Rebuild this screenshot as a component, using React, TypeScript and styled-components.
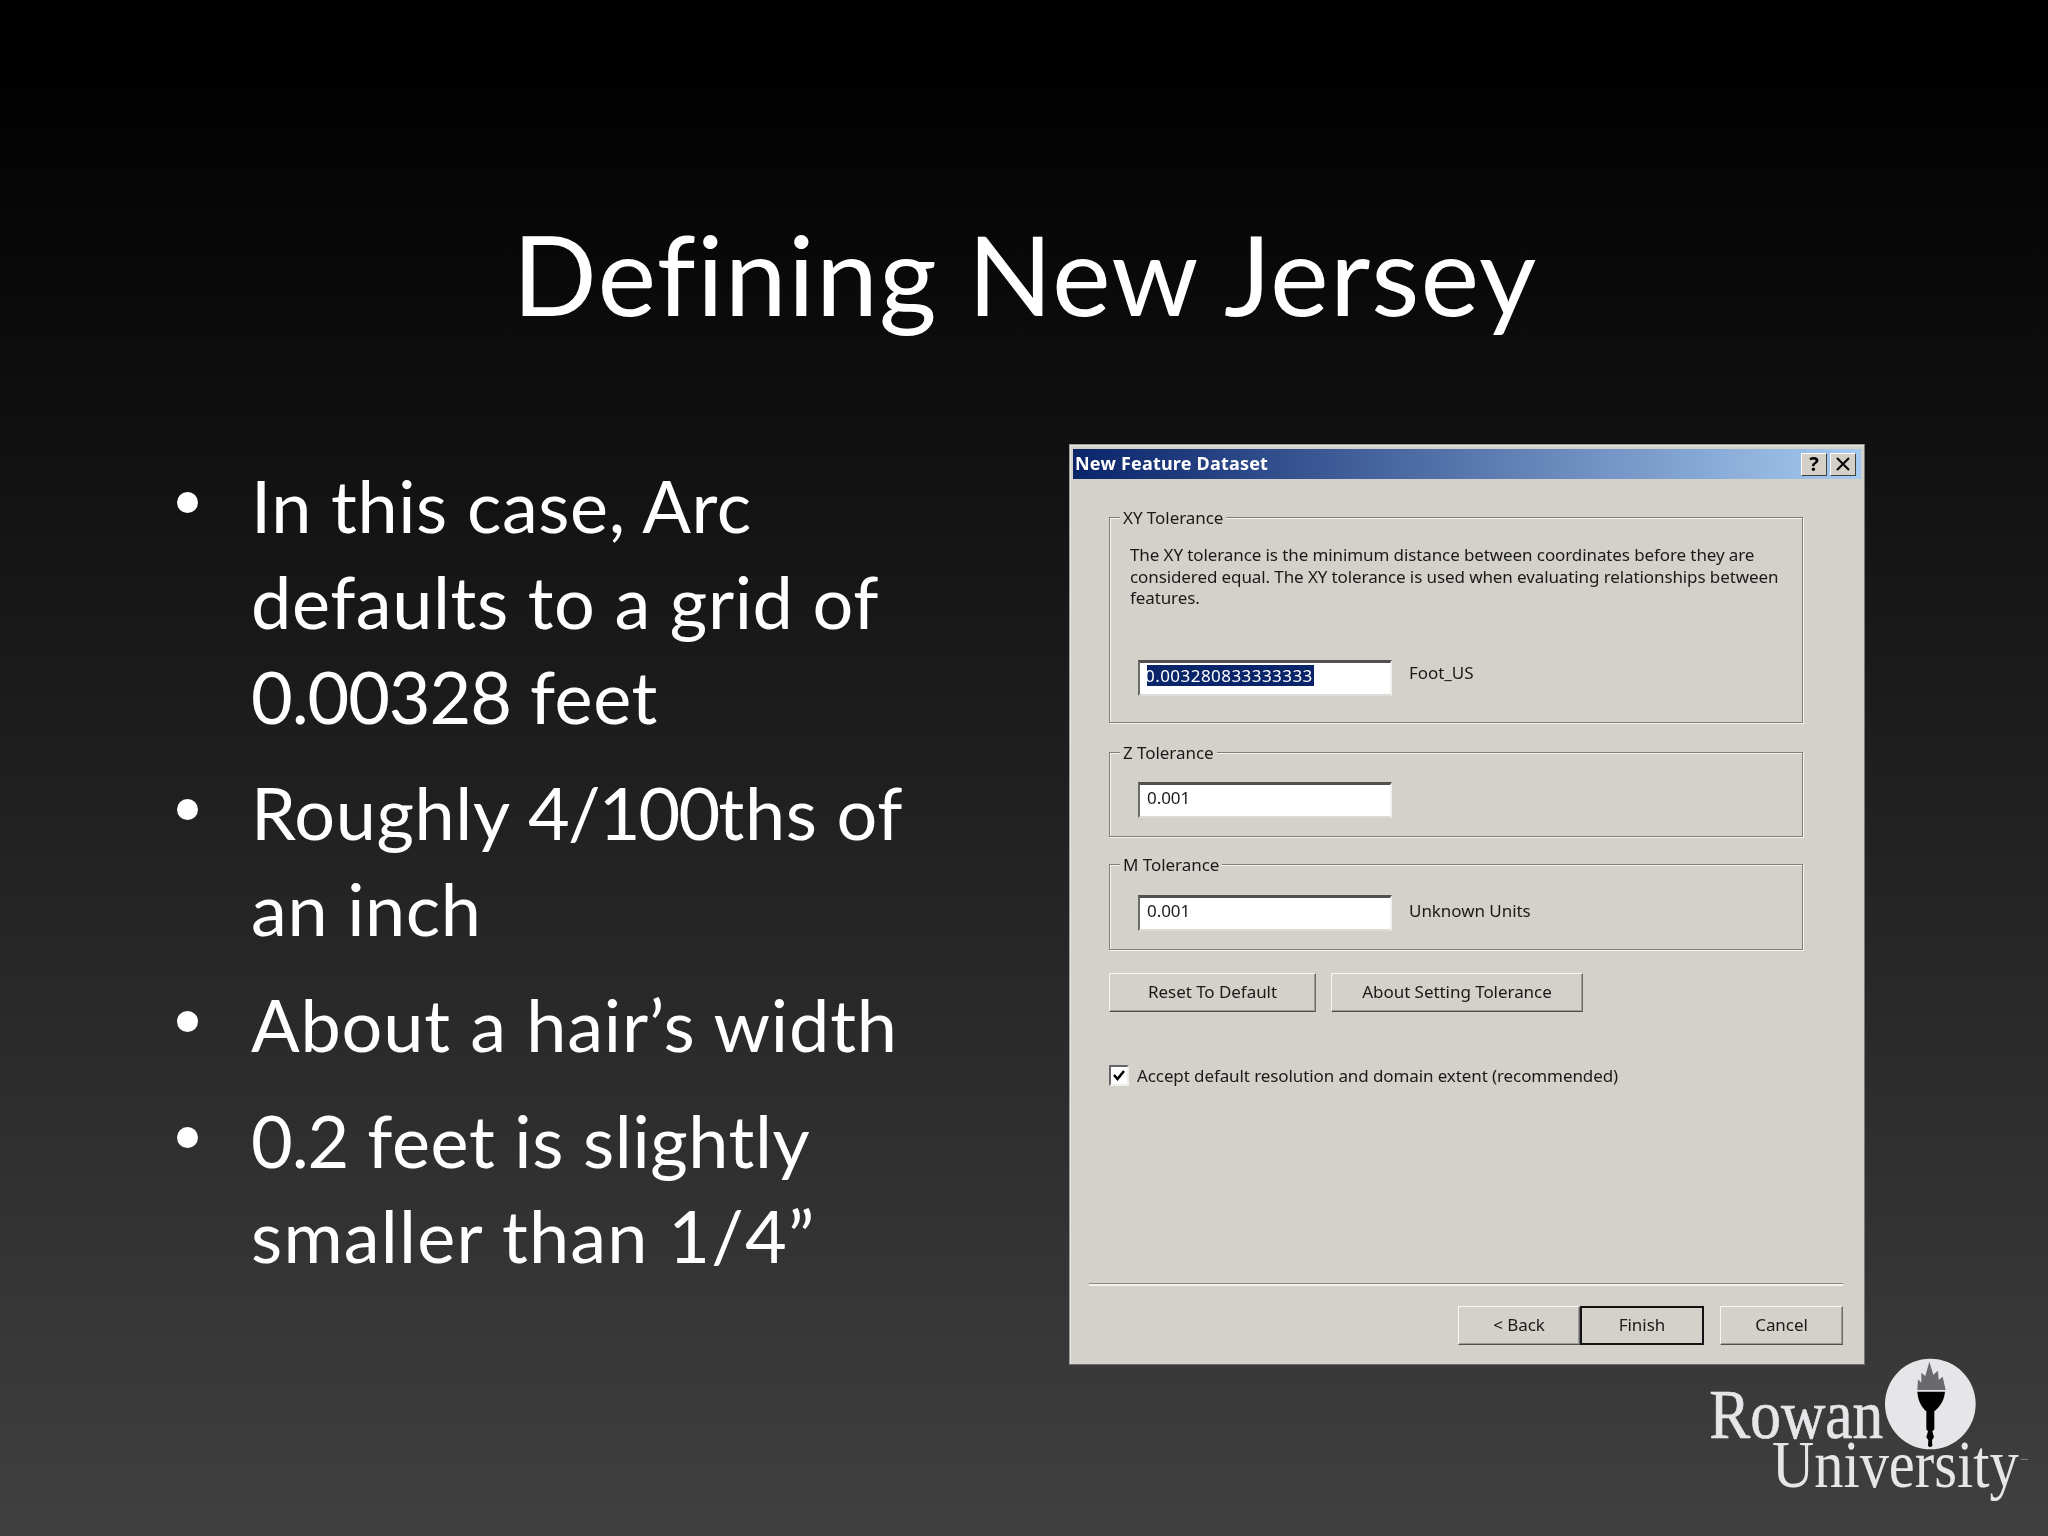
import React from "react";
import styled, { createGlobalStyle } from "styled-components";

const Global = createGlobalStyle`
  html, body { margin: 0; padding: 0; background: #000; }
  #root { width: 2048px; height: 1536px; }
`;

const Slide = styled.div`
  position: relative;
  width: 2048px;
  height: 1536px;
  overflow: hidden;
  background: linear-gradient(180deg, #000 0, #000 60px, #414041 1536px);
  font-family: Lato, "Noto Sans", sans-serif;
  color: #fff;
`;

const Title = styled.h1`
  margin: 0;
  padding: 212px 0 0 2px;
  height: 232px;
  box-sizing: content-box;
  text-align: center;
  font-size: 111px;
  line-height: 122px;
  font-weight: 400;
  letter-spacing: 1.25px;
`;

const Content = styled.div`
  display: flex;
  align-items: flex-start;
`;

const BulletList = styled.ul`
  list-style: none;
  margin: 0;
  padding: 14px 0 0 177px;
  width: 960px;
  box-sizing: border-box;
  flex: none;
`;

const Bullet = styled.li`
  display: flex;
  gap: 53px;
  font-size: 72px;
  line-height: 95.5px;
  margin-bottom: 20.5px;
  letter-spacing: 0.6px;
  white-space: nowrap;
  &::before {
    content: "";
    flex: none;
    width: 21px;
    height: 21px;
    margin-top: 34px;
    border-radius: 50%;
    background: #fff;
  }
`;

const Tracked = styled.span<{ $spacing: number }>`
  letter-spacing: ${(p) => p.$spacing}px;
`;

const Dialog = styled.div`
  width: 796px;
  height: 921px;
  box-sizing: border-box;
  margin-left: 109px;
  flex: none;
  padding: 4px 3px 0;
  background: #d3d1ca;
  border: 1px solid #9a9a98;
  border-right-color: #777;
  border-bottom-color: #6f6f6f;
  box-shadow: inset 1px 1px 0 #e8e8e4;
  font-family: "Noto Sans", sans-serif;
  font-size: 17px;
  letter-spacing: -0.05px;
  color: #1a1a1a;
  filter: blur(0.35px);
`;

const TitleBar = styled.div`
  height: 30px;
  display: flex;
  align-items: center;
  padding: 0 5px 0 2px;
  background: linear-gradient(90deg, #0a246a 0%, #a6caf0 100%);
`;

const TitleText = styled.span`
  flex: 1;
  color: #fff;
  font-weight: 700;
  font-size: 18px;
  letter-spacing: 0.2px;
  padding-bottom: 2px;
`;

const CaptionButton = styled.span`
  width: 26px;
  height: 23px;
  margin-left: 3px;
  box-sizing: border-box;
  display: flex;
  align-items: center;
  justify-content: center;
  background: #d4d0c8;
  border: 1px solid;
  border-color: #fff #404040 #404040 #fff;
  color: #000;
  font-weight: 700;
  font-size: 20px;
  line-height: 1;
`;

const Body = styled.div`
  padding: 38px 20px 0 36px;
  display: flex;
  flex-direction: column;
`;

const Group = styled.div<{ $height: number; $gap: number }>`
  position: relative;
  height: ${(p) => p.$height}px;
  margin-bottom: ${(p) => p.$gap}px;
  width: 694px;
  box-sizing: border-box;
  border: 1px solid #7d7d7a;
  box-shadow: 1px 1px 0 #f4f4f0, inset 1px 1px 0 #f4f4f0;
`;

const Legend = styled.span`
  position: absolute;
  left: 10px;
  top: -11px;
  padding: 0 3px;
  background: #d3d1ca;
  line-height: 22px;
`;

const Description = styled.p`
  margin: 0;
  padding: 26px 0 0 20px;
  line-height: 21.5px;
  height: 116px;
  box-sizing: content-box;
  width: 665px;
  letter-spacing: -0.1px;
`;

const FieldRow = styled.div<{ $top?: number }>`
  display: flex;
  align-items: center;
  padding: ${(p) => p.$top ?? 0}px 0 0 28px;
`;

const Field = styled.div`
  width: 254px;
  height: 36px;
  box-sizing: border-box;
  display: flex;
  align-items: center;
  padding: 0 0 7px 7px;
  background: #fff;
  border-style: solid;
  border-width: 3px 2px 2px 2px;
  border-color: #50504e #f0f0ec #dcdcd6 #6a6a68;
`;

const Selected = styled.span`
  background: #0a246a;
  color: #fff;
  line-height: 21px;
  letter-spacing: 0.45px;
  width: 167px;
  text-indent: -2px;
  white-space: nowrap;
  overflow: hidden;
`;

const Unit = styled.span<{ $lift: number }>`
  margin-left: 17px;
  margin-top: -${(p) => p.$lift}px;
`;

const ButtonRow = styled.div`
  display: flex;
  gap: 15px;
`;

const Button = styled.div<{ $width: number; $default?: boolean }>`
  width: ${(p) => p.$width}px;
  height: 39px;
  box-sizing: border-box;
  display: flex;
  align-items: center;
  justify-content: center;
  padding-bottom: 3px;
  border: 1px solid;
  border-color: #f6f6f2 #6a6a68 #50504e #f6f6f2;
  box-shadow: inset -1px -1px 0 #9a9a96;
  ${(p) => p.$default && "outline: 2px solid #111; outline-offset: -2px;"}
`;

const CheckRow = styled.div`
  display: flex;
  align-items: center;
  gap: 8px;
  margin-top: 53px;
  height: 21px;
  letter-spacing: -0.1px;
`;

const CheckBox = styled.span`
  width: 20px;
  height: 21px;
  box-sizing: border-box;
  background: #fff;
  border: 2px solid;
  border-color: #666 #efefea #efefea #666;
  display: flex;
  align-items: center;
  justify-content: center;
`;

const Separator = styled.div`
  width: 754px;
  height: 3px;
  margin: 197px 0 0 -20px;
  background: #f2f2ee;
  border-top: 1px solid #8a8a84;
  box-sizing: border-box;
`;

const Footer = styled.div`
  display: flex;
  justify-content: flex-end;
  width: 734px;
  margin-top: 20px;
`;

const FooterSpacer = styled.span`
  width: 16px;
`;

const Logo = styled.svg`
  position: absolute;
  left: 1680px;
  top: 1340px;
`;

export default function App() {
  return (
    <Slide>
      <Global />
      <Title>Defining New Jersey</Title>
      <Content>
        <BulletList>
          <Bullet><span>In this case, Arc<br />defaults to a grid of<br /><Tracked $spacing={-1.1}>0.00328</Tracked> feet</span></Bullet>
          <Bullet><span>Roughly <Tracked $spacing={-1.8}>4/100</Tracked>ths of<br />an inch</span></Bullet>
          <Bullet><span><Tracked $spacing={0.85}>About a hair’s width</Tracked></span></Bullet>
          <Bullet><span><Tracked $spacing={-1.1}>0.2</Tracked> feet is slightly<br /><Tracked $spacing={1.2}>smaller than 1/4”</Tracked></span></Bullet>
        </BulletList>
        <Dialog>
          <TitleBar>
            <TitleText>New Feature Dataset</TitleText>
            <CaptionButton>?</CaptionButton>
            <CaptionButton>
              <svg width="16" height="14" viewBox="0 0 16 14"><path d="M2 1l12 12M14 1L2 13" stroke="#000" strokeWidth="2" /></svg>
            </CaptionButton>
          </TitleBar>
          <Body>
            <Group $height={206} $gap={29}>
              <Legend>XY Tolerance</Legend>
              <Description>
                The XY tolerance is the minimum distance between coordinates before they are considered equal. The XY tolerance is used when evaluating relationships between features.
              </Description>
              <FieldRow>
                <Field><Selected>0.003280833333333</Selected></Field>
                <Unit $lift={12}>Foot_US</Unit>
              </FieldRow>
            </Group>
            <Group $height={85} $gap={27}>
              <Legend>Z Tolerance</Legend>
              <FieldRow $top={29}>
                <Field>0.001</Field>
              </FieldRow>
            </Group>
            <Group $height={86} $gap={23}>
              <Legend>M Tolerance</Legend>
              <FieldRow $top={30}>
                <Field>0.001</Field>
                <Unit $lift={6}>Unknown Units</Unit>
              </FieldRow>
            </Group>
            <ButtonRow>
              <Button $width={207}>Reset To Default</Button>
              <Button $width={252}>About Setting Tolerance</Button>
            </ButtonRow>
            <CheckRow>
              <CheckBox>
                <svg width="14" height="13" viewBox="0 0 14 13"><path d="M2 6l3.5 4L12 2" fill="none" stroke="#000" strokeWidth="2.6" /></svg>
              </CheckBox>
              Accept default resolution and domain extent (recommended)
            </CheckRow>
            <Separator />
            <Footer>
              <Button $width={122}>&lt; Back</Button>
              <Button $width={124} $default>Finish</Button>
              <FooterSpacer />
              <Button $width={123}>Cancel</Button>
            </Footer>
          </Body>
        </Dialog>
      </Content>
      <Logo width="360" height="180" viewBox="0 0 1080 540">
        <ellipse cx="751" cy="192" rx="136" ry="136" fill="#e6e6e9" />
        <path d="M712 150 L714 118 L724 128 L724 98 L736 108 L748 65 L760 104 L774 92 L776 120 L788 110 L797 150 Z" fill="#6a6a6c" />
        <path d="M712 155 H795 C792 190 772 205 763 214 V268 L757 274 L762 292 L756 300 L757 318 L750 322 L744 318 L745 300 L739 292 L744 274 L739 268 V214 C730 205 714 190 712 155 Z" fill="#000" />
        <text x="88" y="293" textLength="522" lengthAdjust="spacingAndGlyphs" fontFamily="'Liberation Serif', serif" fontSize="210" fill="#e6e6e9" stroke="#e6e6e9" strokeWidth="2">Rowan</text>
        <text x="276" y="440" textLength="740" lengthAdjust="spacingAndGlyphs" fontFamily="'Liberation Serif', serif" fontSize="200" fill="#e6e6e9">University</text>
        <path d="M1022 358h22" stroke="#aaa" strokeWidth="2" />
      </Logo>
    </Slide>
  );
}
